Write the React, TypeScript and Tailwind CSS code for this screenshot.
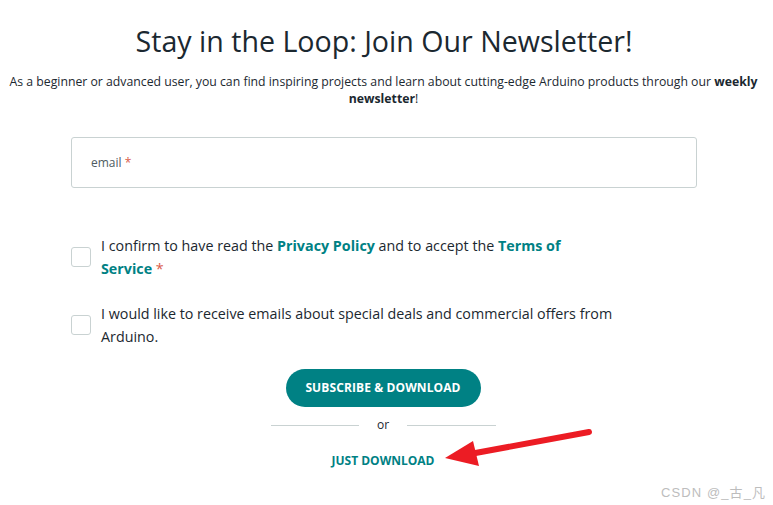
import React from "react";

export default function App() {
  return (
    <div
      className="relative w-[773px] h-[505px] bg-white overflow-hidden text-[#1f2a30]"
      style={{ fontFamily: '"Open Sans", "Noto Sans", sans-serif' }}
    >
      <div className="flex flex-col items-center pt-[22px]">
        <h1 className="text-[28.6px] leading-[38px] font-normal text-[#1b2830] ml-[-5px] whitespace-nowrap">
          Stay in the Loop: Join Our Newsletter!
        </h1>
        <p className="mt-[13px] w-[765px] text-center text-[12.25px] leading-[17px] text-[#1b2830] ml-[-6px]">
          As a beginner or advanced user, you can find inspiring projects and learn about cutting-edge Arduino products through our{" "}
          <b className="font-bold">weekly newsletter</b>!
        </p>
      </div>

      <div className="ml-[71px] w-[626px] mt-[30px]">
        <div className="h-[51px] border border-[#c9d2d2] rounded-[3px] flex items-center px-[19px]">
          <span className="text-[12px] text-[#4e5b61]">
            email <span className="text-[#da5b4a]">*</span>
          </span>
        </div>

        <div className="mt-[46px] flex flex-col gap-[22px]">
          <label className="flex items-center gap-[10px]">
            <span className="w-[20px] h-[20px] shrink-0 border border-[#c9d2d2] rounded-[3px] bg-white" />
            <span className="w-[480px] text-[14.3px] leading-[23px] text-[#1b2830]">
              I confirm to have read the{" "}
              <b className="font-bold text-[#008184]">Privacy Policy</b> and to accept the{" "}
              <b className="font-bold text-[#008184]">Terms of Service</b>{" "}
              <span className="text-[#da5b4a]">*</span>
            </span>
          </label>
          <label className="flex items-center gap-[10px]">
            <span className="w-[20px] h-[20px] shrink-0 border border-[#c9d2d2] rounded-[3px] bg-white" />
            <span className="w-[525px] text-[14.3px] leading-[23px] text-[#1b2830]">
              I would like to receive emails about special deals and commercial offers from Arduino.
            </span>
          </label>
        </div>

        <div className="mt-[21px] flex flex-col items-center ml-[-2px]">
          <button className="h-[38px] w-[195px] rounded-full bg-[#008184] text-white text-[12px] font-bold tracking-[0.1px]">
            SUBSCRIBE &amp; DOWNLOAD
          </button>
          <div className="mt-[10px] flex items-center gap-[18px] w-[225px]">
            <div className="flex-1 h-px bg-[#c9d2d2]" />
            <span className="text-[12px] leading-[16px] text-[#1b2830]">or</span>
            <div className="flex-1 h-px bg-[#c9d2d2]" />
          </div>
          <span className="mt-[19px] text-[12px] font-bold text-[#008184]">JUST DOWNLOAD</span>
        </div>
      </div>

      <svg className="absolute left-0 top-0 pointer-events-none" width="773" height="505">
        <line x1="589" y1="432" x2="470" y2="454" stroke="#ec1c24" strokeWidth="6" strokeLinecap="round" />
        <polygon points="445,458 473,441 479,466" fill="#ec1c24" />
      </svg>

      <div
        className="absolute left-[661px] top-[483px] text-[13px] tracking-[1.1px] text-[#bdbdbd]"
        style={{ fontFamily: '"Liberation Sans", "Noto Sans CJK SC", sans-serif' }}
      >
        CSDN @_古_凡
      </div>
    </div>
  );
}
